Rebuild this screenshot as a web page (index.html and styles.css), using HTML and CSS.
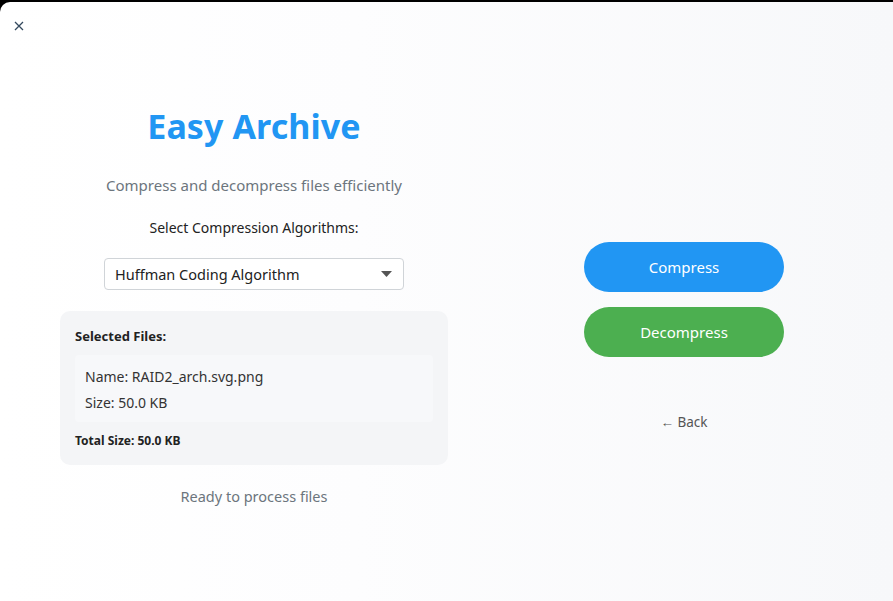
FILE: index.html
```html
<!DOCTYPE html>
<html>
<head>
<meta charset="utf-8">
<link rel="stylesheet" href="styles.css">
</head>
<body>
<div class="window">
  <button class="close" aria-label="Close">
    <svg width="10" height="10" viewBox="0 0 10 10"><path d="M1 1 L9 9 M9 1 L1 9" stroke="#34495e" stroke-width="1.3" fill="none"/></svg>
  </button>
  <div class="layout">
    <section class="left">
      <h1 class="title">Easy Archive</h1>
      <p class="subtitle">Compress and decompress files efficiently</p>
      <label class="select-label">Select Compression Algorithms:</label>
      <div class="select">
        <span>Huffman Coding Algorithm</span>
        <svg width="11" height="6" viewBox="0 0 11 6"><path d="M0 0 H11 L5.5 6 Z" fill="#555"/></svg>
      </div>
      <div class="files">
        <div class="files-head">Selected Files:</div>
        <div class="file-item">
          <div>Name: RAID2_arch.svg.png</div>
          <div>Size: 50.0 KB</div>
        </div>
        <div class="total">Total Size: 50.0 KB</div>
      </div>
      <p class="status">Ready to process files</p>
    </section>
    <section class="right">
      <button class="btn btn-blue">Compress</button>
      <button class="btn btn-green">Decompress</button>
      <a class="back">← Back</a>
    </section>
  </div>
</div>
</body>
</html>
```
FILE: styles.css
```css
html, body {
  margin: 0;
  padding: 0;
  background: #000;
  height: 100%;
}
body {
  font-family: "Noto Sans", "Open Sans", sans-serif;
  padding-top: 2px;
  box-sizing: border-box;
}
.window {
  height: 599px;
  background: linear-gradient(to right, #ffffff 0%, #fdfdfe 40%, #f7f8fa 100%);
  border-top-left-radius: 10px;
  position: relative;
}
.close {
  position: absolute;
  left: 13px;
  top: 18px;
  width: 12px;
  height: 12px;
  padding: 0;
  border: none;
  background: none;
  display: flex;
  align-items: center;
  justify-content: center;
}
.layout {
  display: grid;
  grid-template-columns: 388px 1fr;
  column-gap: 27px;
  padding-left: 60px;
}
.left {
  display: flex;
  flex-direction: column;
  align-items: center;
  padding-top: 101px;
}
.title {
  margin: 0;
  font-size: 34px;
  font-weight: 700;
  color: #2196f3;
  line-height: 46px;
  letter-spacing: 0.1px;
}
.subtitle {
  margin: 26px 0 0;
  font-size: 15px;
  color: #6c757d;
  line-height: 20px;
}
.select-label {
  margin-top: 23px;
  font-size: 14px;
  color: #222;
  line-height: 20px;
}
.select {
  margin-top: 20px;
  width: 300px;
  height: 32px;
  box-sizing: border-box;
  border: 1px solid #d0d4d8;
  border-radius: 4px;
  background: #fff;
  display: flex;
  align-items: center;
  justify-content: space-between;
  padding: 0 11px 0 10px;
  font-size: 14.5px;
  color: #222;
}
.files {
  margin-top: 21px;
  width: 388px;
  box-sizing: border-box;
  background: #f4f5f7;
  border-radius: 10px;
  padding: 15px 15px 15px;
}
.files-head {
  font-size: 13px;
  font-weight: 700;
  color: #222;
  line-height: 20px;
}
.file-item {
  margin-top: 9px;
  background: #f7f8fa;
  border-radius: 4px;
  padding: 9px 10px 6px;
  font-size: 14px;
  color: #333;
  line-height: 26px;
}
.total {
  margin-top: 10px;
  font-size: 12px;
  font-weight: 700;
  color: #222;
  line-height: 18px;
}
.status {
  margin: 21px 0 0;
  font-size: 14.5px;
  color: #6c757d;
  line-height: 20px;
}
.right {
  display: flex;
  flex-direction: column;
  align-items: center;
  padding-top: 240px;
}
.btn {
  width: 200px;
  height: 50px;
  border: none;
  border-radius: 25px;
  color: #fff;
  font-family: inherit;
  font-size: 15px;
}
.btn-blue { background: #2196f3; }
.btn-green { background: #4caf50; margin-top: 15px; }
.back {
  margin-top: 55px;
  font-size: 13.5px;
  color: #555;
  line-height: 20px;
}
```
